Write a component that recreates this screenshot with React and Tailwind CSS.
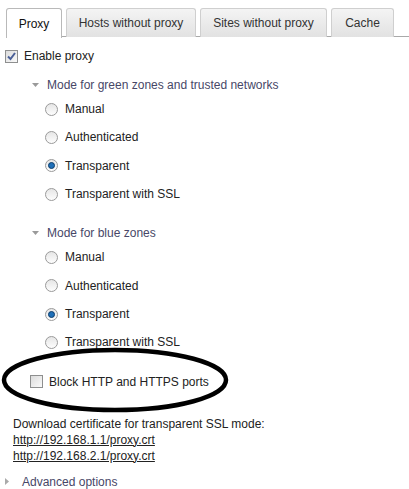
import React from 'react'

const tabs = [
    { label: 'Proxy', w: 'w-[56px]', active: true },
    { label: 'Hosts without proxy', w: 'w-[130px]' },
    { label: 'Sites without proxy', w: 'w-[127px]' },
    { label: 'Cache', w: 'w-[63px]' },
]

const Radio = ({ checked }) => (
    <span className="relative inline-flex w-[13px] h-[13px] rounded-full border border-[#9a9a9a] bg-gradient-to-b from-[#e6e6e6] to-[#fdfdfd] items-center justify-center shrink-0">
        {checked && (
            <span className="w-[7px] h-[7px] rounded-full bg-[#1e6fb8] border border-[#0d3d6b]" />
        )}
    </span>
)

const CheckBox = ({ checked }) => (
    <span className="relative inline-flex w-[13px] h-[13px] border border-[#8e8f8f] bg-gradient-to-br from-[#dcdcdc] to-[#fafafa] items-center justify-center shrink-0">
        {checked && (
            <svg width="11" height="11" viewBox="0 0 11 11" className="absolute left-[0px] top-[0px]">
                <path d="M2 5.5 L4.5 8 L9 2" fill="none" stroke="#4a5f97" strokeWidth="2" />
            </svg>
        )}
    </span>
)

const RadioRow = ({ label, checked }) => (
    <div className="h-[28.33px] flex items-center pl-[45px] gap-[7px]">
        <Radio checked={checked} />
        <span className="text-[#222]">{label}</span>
    </div>
)

const Group = ({ title, value }) => (
    <div>
        <div className="h-[20px] flex items-center pl-[32px] gap-[8px] text-[#474767]">
            <svg width="7" height="4" viewBox="0 0 7 4"><path d="M0 0 H7 L3.5 4 Z" fill="#9a9a9a" /></svg>
            <span>{title}</span>
        </div>
        {['Manual', 'Authenticated', 'Transparent', 'Transparent with SSL'].map(m => (
            <RadioRow key={m} label={m} checked={m === value} />
        ))}
    </div>
)

export default function App() {
    return (
        <div className="relative w-[409px] h-[489px] bg-white overflow-hidden text-[12px] font-['Liberation_Sans',Arial,sans-serif]">
            {/* tabs */}
            <div className="pt-[8px] ml-[6px] flex gap-[4px] border-b border-[#a9a9a9] h-[37px]">
                {tabs.map(t => (
                    <div
                        key={t.label}
                        className={`${t.w} h-[29px] flex items-center justify-center border border-b-0 rounded-t-[3px] ${t.active ? 'bg-white border-[#b9b9b9] h-[30px] text-[#111]' : 'bg-gradient-to-b from-[#f4f4f4] to-[#e2e2e2] border-[#cfcfcf] text-[#333]'}`}
                    >
                        {t.label}
                    </div>
                ))}
            </div>

            <div className="mt-[5px] h-[28px] flex items-center pl-[5px] gap-[6px]">
                <CheckBox checked />
                <span className="text-[#222]">Enable proxy</span>
            </div>

            <div className="mt-[5px]">
                <Group title="Mode for green zones and trusted networks" value="Transparent" />
            </div>
            <div className="mt-[15px]">
                <Group title="Mode for blue zones" value="Transparent" />
            </div>

            <div className="mt-[11px] h-[28px] flex items-center pl-[30px] gap-[6px]">
                <CheckBox />
                <span className="text-[#222]">Block HTTP and HTTPS ports</span>
            </div>

            <div className="mt-[20px] pl-[13px] leading-[16px] text-[#222]">
                <div>Download certificate for transparent SSL mode:</div>
                <div className="underline">http://192.168.1.1/proxy.crt</div>
                <div className="underline">http://192.168.2.1/proxy.crt</div>
            </div>

            <div className="mt-[8px] h-[20px] flex items-center pl-[5px] gap-[13px] text-[#474767]">
                <svg width="4" height="7" viewBox="0 0 4 7"><path d="M0 0 V7 L4 3.5 Z" fill="#aaa" /></svg>
                <span>Advanced options</span>
            </div>

            {/* hand drawn highlight */}
            <svg className="absolute left-0 top-0 pointer-events-none" width="409" height="489">
                <ellipse cx="115" cy="380" rx="111" ry="30" fill="none" stroke="#000" strokeWidth="4.5" />
            </svg>
        </div>
    )
}
